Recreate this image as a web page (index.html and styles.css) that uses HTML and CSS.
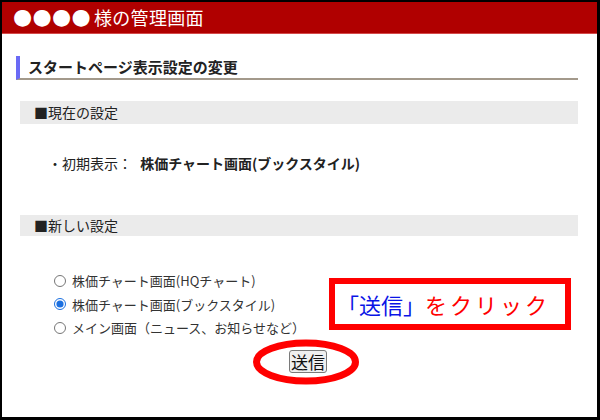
FILE: index.html
```html
<!DOCTYPE html>
<html lang="ja">
<head>
<meta charset="utf-8">
<link rel="stylesheet" href="styles.css">
</head>
<body>
<div class="frame">
  <div class="header"><span class="dots">●●●●</span><span class="name">様の管理画面</span></div>
  <div class="main">
    <h2 class="title">スタートページ表示設定の変更</h2>
    <div class="bar">■現在の設定</div>
    <p class="current">・初期表示： <b>株価チャート画面(ブックスタイル)</b></p>
    <div class="bar bar2">■新しい設定</div>
    <ul class="radios">
      <li><label><input type="radio" name="s">株価チャート画面(HQチャート)</label></li>
      <li><label><input type="radio" name="s" checked>株価チャート画面(ブックスタイル)</label></li>
      <li><label><input type="radio" name="s">メイン画面（ニュース、お知らせなど）</label></li>
    </ul>
    <div class="submit-row"><button class="submit">送信</button></div>
  </div>
  <div class="note"><span class="blue">「送信」</span><span class="red">をクリック</span></div>
  <svg class="ring" width="120" height="56" viewBox="0 0 120 56"><ellipse cx="60" cy="28" rx="49.5" ry="19" fill="none" stroke="#ff0000" stroke-width="7"/></svg>
</div>
</body>
</html>
```
FILE: styles.css
```css
html, body { margin: 0; padding: 0; background: #000; }
.frame {
  position: relative;
  box-sizing: border-box;
  width: 600px;
  height: 420px;
  border-style: solid;
  border-color: #000;
  border-width: 2px 3px 3px 2px;
  background: #fff;
  font-family: "Noto Sans CJK JP", "Noto Sans", sans-serif;
  color: #222;
  overflow: hidden;
}
.header {
  height: 31px;
  background: #b00000;
  border-bottom: 1px solid #d44a4a;
  color: #fff;
  font-size: 18px;
  line-height: 31px;
  padding-left: 11px;
  white-space: nowrap;
  display: flex;
  align-items: center;
}
.dots {
  font-family: "DejaVu Sans", sans-serif;
  font-size: 22px;
  line-height: 1;
  letter-spacing: 0.3px;
  margin-top: -2px;
}
.name { margin-left: 3px; letter-spacing: 0.3px; }
.main { padding: 0 19px 0 14px; }
.title {
  margin: 22px 0 0 0;
  height: 22px;
  border-left: 4px solid #6a6af5;
  border-bottom: 2px solid #a3998b;
  padding-left: 8px;
  font-size: 15px;
  font-weight: bold;
  line-height: 22px;
  color: #222;
}
.bar {
  margin: 21px 0 0 4px;
  height: 23px;
  background: #ebebeb;
  font-size: 14px;
  line-height: 23px;
  padding-left: 14px;
  color: #222;
}
.bar2 { margin-top: 42px; height: 21px; line-height: 21px; }
.current {
  margin: 29px 0 0 0;
  padding-left: 32px;
  font-size: 14px;
  line-height: 20px;
}
.current b { font-weight: bold; margin-left: 5px; }
.radios {
  list-style: none;
  margin: 33px 0 0 0;
  padding: 0 0 0 35px;
  font-size: 13px;
  color: #333;
}
.radios li { height: 23.5px; line-height: 23.5px; }
.radios label { display: flex; align-items: center; }
.radios input {
  width: 12px;
  height: 12px;
  margin: 0 6px 0 3px;
  accent-color: #1a6fe0;
}
.submit-row { margin-top: 10px; padding-left: 273px; }
.submit {
  font-family: "Noto Sans CJK JP", sans-serif;
  font-size: 17px;
  line-height: 20px;
  padding: 0 1px;
  height: 23px;
  border: 1px solid #7a7a7a;
  border-radius: 3px;
  background: #efefef;
  color: #111;
}
.note {
  position: absolute;
  left: 327px;
  top: 276px;
  width: 228px;
  height: 40px;
  border: 6px solid #ff0000;
  font-size: 22px;
  line-height: 40px;
  padding-left: 2px;
  white-space: nowrap;
}
.blue { color: #0a14e6; }
.red { color: #ff0000; letter-spacing: 3px; }
.ring { position: absolute; left: 244px; top: 332px; }
```
